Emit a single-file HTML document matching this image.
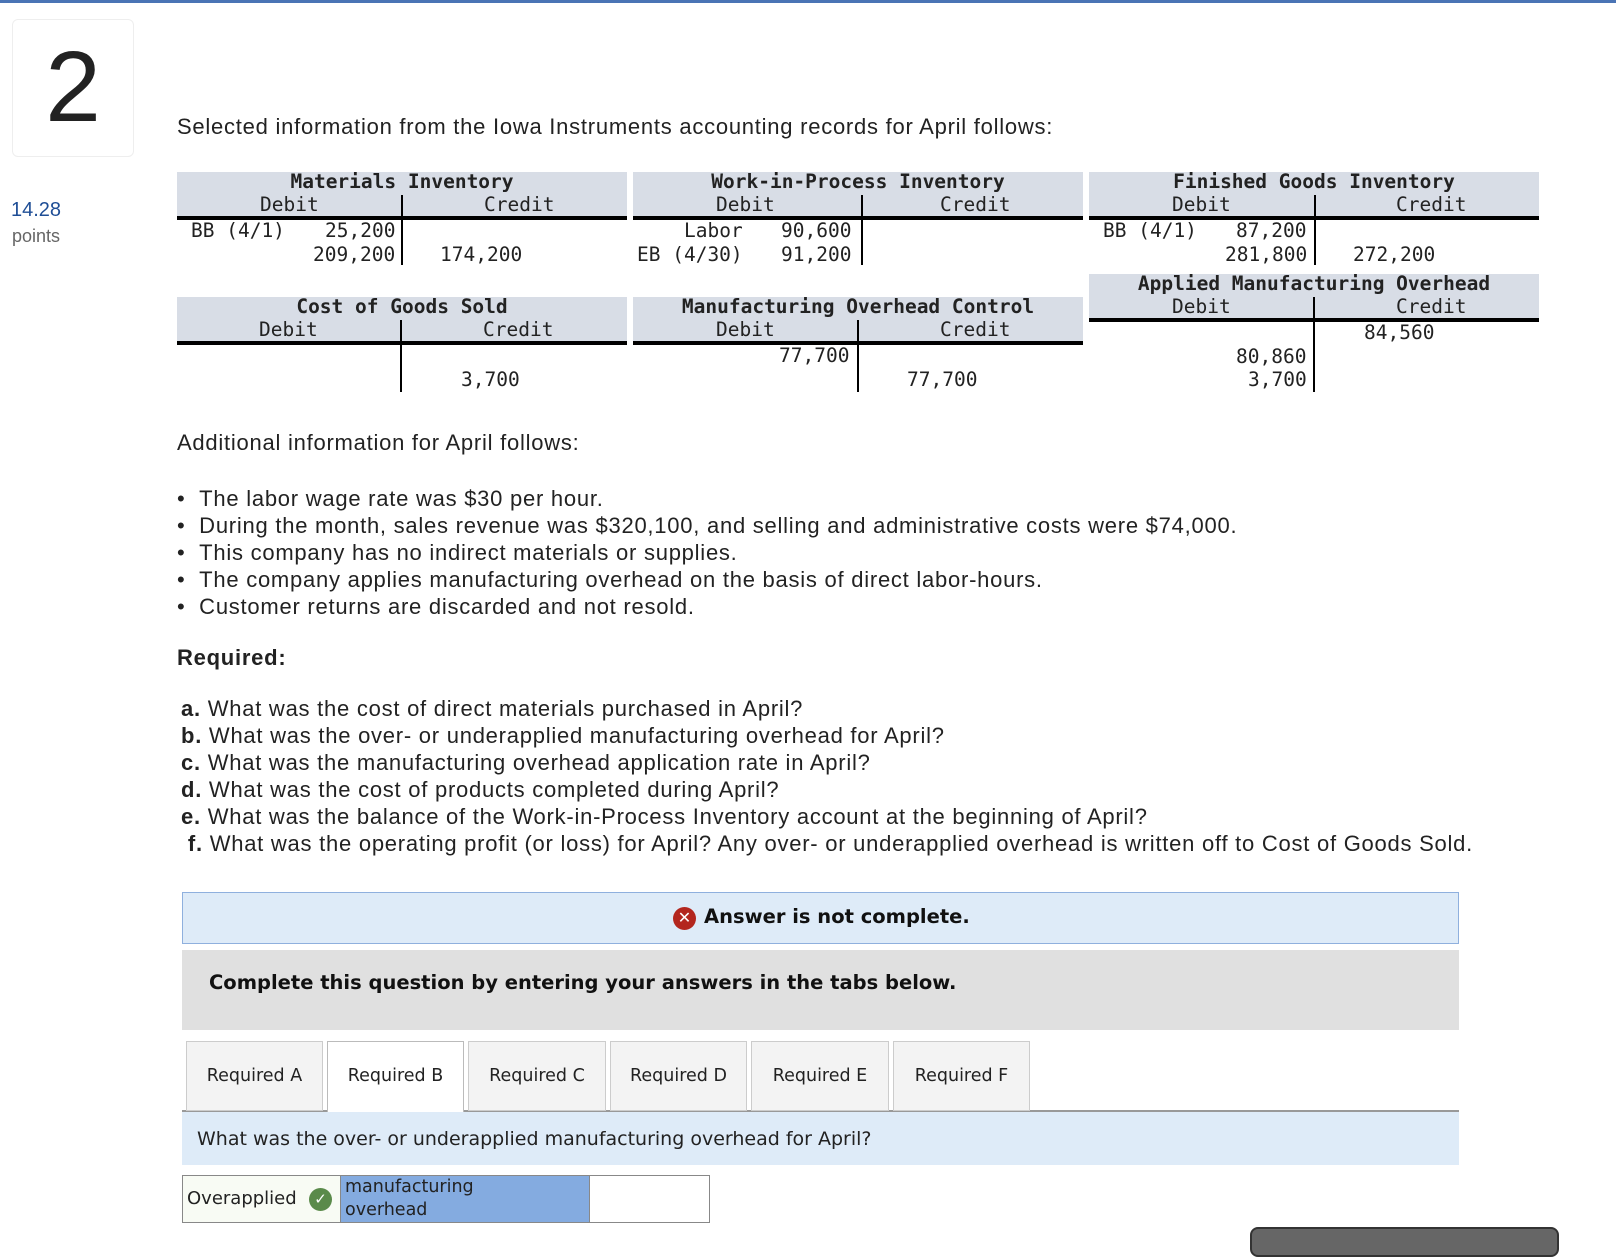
<!DOCTYPE html>
<html><head><meta charset="utf-8"><style>
*{margin:0;padding:0;box-sizing:border-box}
body{width:1616px;height:1234px;position:relative;background:#fff;font-family:"Liberation Sans",sans-serif;color:#222;overflow:hidden}
.a{position:absolute}
.top{left:0;top:0;width:1616px;height:3px;background:#4a74b5}
.num{left:12px;top:19px;width:122px;height:138px;border:1px solid #eee;border-radius:6px;font-size:100px;text-align:center;line-height:134px;color:#222}
.t{font-size:22px;letter-spacing:0.75px;white-space:nowrap}
.m{font-family:"DejaVu Sans Mono","Liberation Mono",monospace;font-size:19.5px;white-space:pre;color:#222}
.hd{background:#d8dde6;border-bottom:4px solid #000}
.vl{width:2px;background:#000}
.v{font-family:"DejaVu Sans",sans-serif}
.tab{position:absolute;top:1041px;height:70px;background:#f3f3f3;border:1px solid #ccc;font-family:"DejaVu Sans",sans-serif;font-size:17.5px;text-align:center;line-height:68px}
ul{list-style:none}
</style></head><body>
<div class="a top"></div>
<div class="a num">2</div>
<div class="a" style="left:11px;top:199px;font-size:20px;color:#1f4e96">14.28</div>
<div class="a" style="left:12px;top:226px;font-size:18px;color:#666">points</div>
<div class="a t" style="left:177px;top:114px">Selected information from the Iowa Instruments accounting records for April follows:</div>

<!-- Materials Inventory -->
<div class="a hd" style="left:177px;top:172px;width:450px;height:48px"></div>
<div class="a m" style="left:177px;top:170px;width:450px;text-align:center;font-weight:bold">Materials Inventory</div>
<div class="a m" style="left:260px;top:193px">Debit</div><div class="a m" style="left:484px;top:193px">Credit</div>
<div class="a vl" style="left:401px;top:195px;height:70px"></div>
<div class="a m" style="left:191px;top:219px">BB (4/1)</div>
<div class="a m" style="left:325px;top:219px">25,200</div>
<div class="a m" style="left:313px;top:243px">209,200</div>
<div class="a m" style="left:440px;top:243px">174,200</div>

<!-- WIP -->
<div class="a hd" style="left:633px;top:172px;width:450px;height:48px"></div>
<div class="a m" style="left:633px;top:170px;width:450px;text-align:center;font-weight:bold">Work-in-Process Inventory</div>
<div class="a m" style="left:716px;top:193px">Debit</div><div class="a m" style="left:940px;top:193px">Credit</div>
<div class="a vl" style="left:861px;top:195px;height:70px"></div>
<div class="a m" style="left:684px;top:219px">Labor</div>
<div class="a m" style="left:781px;top:219px">90,600</div>
<div class="a m" style="left:637px;top:243px">EB (4/30)</div>
<div class="a m" style="left:781px;top:243px">91,200</div>

<!-- FG -->
<div class="a hd" style="left:1089px;top:172px;width:450px;height:48px"></div>
<div class="a m" style="left:1089px;top:170px;width:450px;text-align:center;font-weight:bold">Finished Goods Inventory</div>
<div class="a m" style="left:1172px;top:193px">Debit</div><div class="a m" style="left:1396px;top:193px">Credit</div>
<div class="a vl" style="left:1314px;top:195px;height:70px"></div>
<div class="a m" style="left:1103px;top:219px">BB (4/1)</div>
<div class="a m" style="left:1236px;top:219px">87,200</div>
<div class="a m" style="left:1225px;top:243px">281,800</div>
<div class="a m" style="left:1353px;top:243px">272,200</div>

<!-- COGS -->
<div class="a hd" style="left:177px;top:297px;width:450px;height:48px"></div>
<div class="a m" style="left:177px;top:295px;width:450px;text-align:center;font-weight:bold">Cost of Goods Sold</div>
<div class="a m" style="left:259px;top:318px">Debit</div><div class="a m" style="left:483px;top:318px">Credit</div>
<div class="a vl" style="left:400px;top:320px;height:72px"></div>
<div class="a m" style="left:461px;top:368px">3,700</div>

<!-- MOH control -->
<div class="a hd" style="left:633px;top:297px;width:450px;height:48px"></div>
<div class="a m" style="left:633px;top:295px;width:450px;text-align:center;font-weight:bold">Manufacturing Overhead Control</div>
<div class="a m" style="left:716px;top:318px">Debit</div><div class="a m" style="left:940px;top:318px">Credit</div>
<div class="a vl" style="left:857px;top:320px;height:72px"></div>
<div class="a m" style="left:779px;top:344px">77,700</div>
<div class="a m" style="left:907px;top:368px">77,700</div>

<!-- Applied MOH -->
<div class="a hd" style="left:1089px;top:274px;width:450px;height:48px"></div>
<div class="a m" style="left:1089px;top:272px;width:450px;text-align:center;font-weight:bold">Applied Manufacturing Overhead</div>
<div class="a m" style="left:1172px;top:295px">Debit</div><div class="a m" style="left:1396px;top:295px">Credit</div>
<div class="a vl" style="left:1313px;top:297px;height:95px"></div>
<div class="a m" style="left:1364px;top:321px">84,560</div>
<div class="a m" style="left:1236px;top:345px">80,860</div>
<div class="a m" style="left:1248px;top:368px">3,700</div>

<div class="a t" style="left:177px;top:430px">Additional information for April follows:</div>
<div class="a t" style="left:177px;top:485px;line-height:27px">
<div>•&nbsp;&nbsp;The labor wage rate was $30 per hour.</div>
<div>•&nbsp;&nbsp;During the month, sales revenue was $320,100, and selling and administrative costs were $74,000.</div>
<div>•&nbsp;&nbsp;This company has no indirect materials or supplies.</div>
<div>•&nbsp;&nbsp;The company applies manufacturing overhead on the basis of direct labor-hours.</div>
<div>•&nbsp;&nbsp;Customer returns are discarded and not resold.</div></div>
<div class="a t" style="left:177px;top:645px;font-weight:bold">Required:</div>
<div class="a t" style="left:181px;top:695px;line-height:27px">
<b>a.</b> What was the cost of direct materials purchased in April?<br>
<b>b.</b> What was the over- or underapplied manufacturing overhead for April?<br>
<b>c.</b> What was the manufacturing overhead application rate in April?<br>
<b>d.</b> What was the cost of products completed during April?<br>
<b>e.</b> What was the balance of the Work-in-Process Inventory account at the beginning of April?<br>
&nbsp;<b>f.</b> What was the operating profit (or loss) for April? Any over- or underapplied overhead is written off to Cost of Goods Sold.</div>

<div class="a" style="left:182px;top:892px;width:1277px;height:52px;background:#deebf8;border:1px solid #8fb0de"></div>
<div class="a" style="left:673px;top:907px;width:23px;height:23px;border-radius:50%;background:#b3261e;color:#fff;font-size:16px;text-align:center;line-height:23px">✕</div>
<div class="a v" style="left:704px;top:905px;font-size:19.5px;font-weight:bold;color:#111">Answer is not complete.</div>
<div class="a" style="left:182px;top:950px;width:1277px;height:80px;background:#e0e0e0"></div>
<div class="a v" style="left:209px;top:971px;font-size:19.5px;font-weight:bold;color:#111">Complete this question by entering your answers in the tabs below.</div>

<div class="a" style="left:182px;top:1110px;width:1277px;height:2px;background:#999"></div>
<div class="tab" style="left:186px;width:137px">Required A</div>
<div class="tab" style="left:327px;width:137px;height:72px;background:#fff;border-color:#bbb;border-bottom:none">Required B</div>
<div class="tab" style="left:468px;width:138px">Required C</div>
<div class="tab" style="left:610px;width:137px">Required D</div>
<div class="tab" style="left:751px;width:138px">Required E</div>
<div class="tab" style="left:893px;width:137px">Required F</div>
<div class="a" style="left:182px;top:1112px;width:1277px;height:53px;background:#deebf8"></div>
<div class="a v" style="left:197px;top:1128px;font-size:19px">What was the over- or underapplied manufacturing overhead for April?</div>

<div class="a" style="left:182px;top:1175px;width:528px;height:48px;border:1px solid #888;background:#fff"></div>
<div class="a" style="left:183px;top:1176px;width:157px;height:46px;background:#f8fbf4"></div>
<div class="a v" style="left:187px;top:1188px;font-size:18px">Overapplied</div>
<div class="a" style="left:309px;top:1188px;width:23px;height:23px;border-radius:50%;background:#5a8a4a;color:#fff;font-size:15px;text-align:center;line-height:23px">✓</div>
<div class="a v" style="left:340px;top:1176px;width:250px;height:46px;background:#84abe0;border-left:1px solid #888;border-right:1px solid #888;font-size:17.5px;line-height:23px;padding-left:4px">manufacturing<br>overhead</div>
<div class="a" style="left:1250px;top:1227px;width:309px;height:30px;background:#666;border:2px solid #333;border-radius:8px"></div>
</body></html>
